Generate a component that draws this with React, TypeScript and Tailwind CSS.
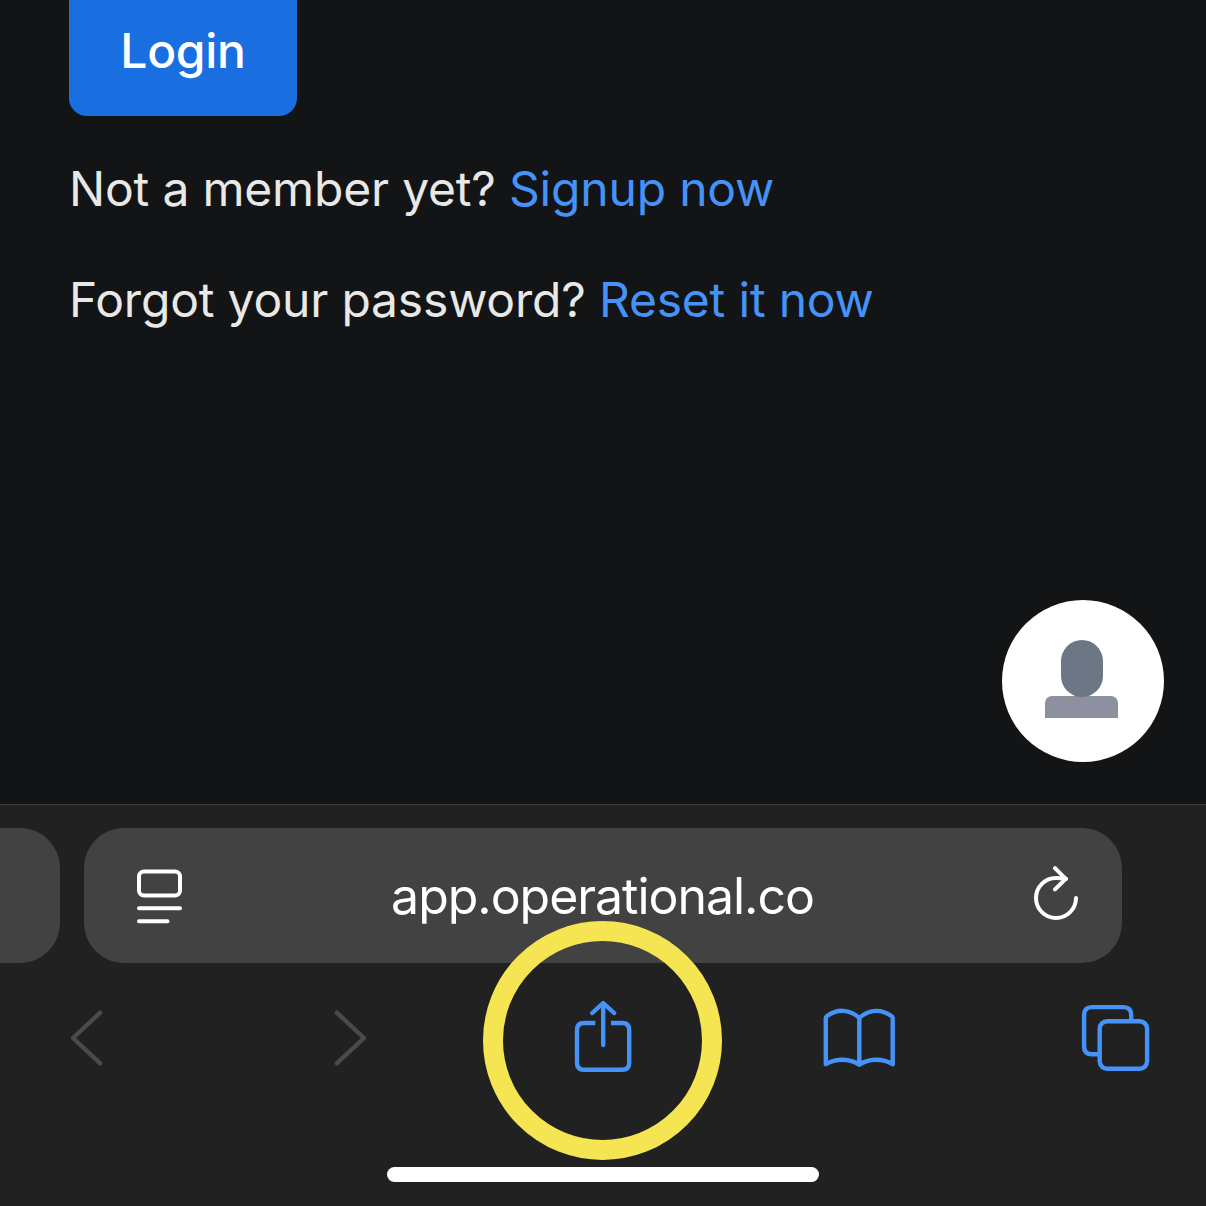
import type { ReactNode } from "react";

function ToolbarIcon({ viewBox, children }: { viewBox: string; children: ReactNode }) {
  return (
    <svg
      className="block size-20"
      viewBox={viewBox}
      fill="none"
      stroke="currentColor"
      strokeWidth="4.4"
      strokeLinecap="round"
      strokeLinejoin="round"
    >
      {children}
    </svg>
  );
}

function LoginArea() {
  return (
    <main className="relative h-[804px] px-[69px] text-5xl leading-[72px] tracking-[-0.19px] text-[#e8e8e6]">
      <button className="flex h-[116px] w-[228px] justify-center rounded-b-[18px] bg-[#1a6fe0] pt-[15px] font-medium tracking-[-0.3px] text-white">
        Login
      </button>
      <p className="mt-[37px] whitespace-nowrap">
        Not a member yet? <a className="text-[#4593f8]">Signup now</a>
      </p>
      <p className="mt-[39px] whitespace-nowrap">
        Forgot your password? <a className="text-[#4593f8]">Reset it now</a>
      </p>
      <div className="absolute top-[600px] right-[42px] flex size-[162px] flex-col items-center rounded-full bg-white pt-10">
        <div className="z-10 mr-[3px] h-[57px] w-[42px] rounded-full bg-[#6d7684]" />
        <div className="-mt-px mr-[3px] h-[22px] w-[73px] rounded-t-[7px] bg-[#8d909e]" />
      </div>
    </main>
  );
}

function AddressBar() {
  return (
    <div className="flex h-[135px] gap-6">
      <div className="w-[60px] rounded-r-[40px] bg-[#424242]" />
      <div className="flex w-[1038px] items-center justify-between rounded-[40px] bg-[#424242] pr-[43px] pl-[52px] text-white">
        <svg className="h-[56px] w-[46px]" viewBox="136 868 46 56" fill="none" stroke="currentColor" strokeWidth="4" strokeLinecap="round">
          <rect x="139" y="871.5" width="41" height="24" rx="5" />
          <path d="M139 908.3H180M139 921.2H167.5" />
        </svg>
        <span className="mr-[10px] text-[50px] leading-[60px] tracking-[-1.04px]">app.operational.co</span>
        <svg className="mb-1 h-[56px] w-[46px]" viewBox="1033 866 46 56" fill="none" stroke="currentColor" strokeWidth="4" strokeLinecap="round" strokeLinejoin="round">
          <path d="M1066 878.8C1062.5 878.2 1059 878 1056 878A20 20 0 1 0 1076 898" />
          <path d="M1055 868.2L1065.7 878.9L1055 889.4" />
        </svg>
      </div>
    </div>
  );
}

function Toolbar() {
  return (
    <div className="mt-[34px] flex h-20 text-[#4593f8]">
      <div className="ml-[47px] text-[#4a4a4a]">
        <ToolbarIcon viewBox="47 997 80 80">
          <path d="M100.2 1012.7L73 1038L100.2 1063.3" />
        </ToolbarIcon>
      </div>
      <div className="ml-[183px] text-[#4a4a4a]">
        <ToolbarIcon viewBox="310 997 80 80">
          <path d="M336.8 1012.7L364 1038L336.8 1063.3" />
        </ToolbarIcon>
      </div>
      <div className="relative ml-[173px]">
        <ToolbarIcon viewBox="563 997 80 80">
          <path strokeLinecap="butt" d="M595.3 1023H584Q577 1023 577 1030V1062.8Q577 1069.8 584 1069.8H622.2Q629.2 1069.8 629.2 1062.8V1030Q629.2 1023 622.2 1023H611" />
          <path d="M603.2 1045V1003.5M592.3 1013L603.2 1003L614.1 1013" />
        </ToolbarIcon>
        <div className="absolute -top-[76px] -left-20 size-[239px] rounded-full border-20 border-[#f6e552]" />
      </div>
      <div className="ml-[176px]">
        <ToolbarIcon viewBox="819 997 80 80">
          <path d="M859.3 1018V1064.7C850 1058.2 836 1058 825.8 1064.2V1018C825.8 1017 826.2 1016.5 827 1016C837 1008.8 850 1008.8 859.3 1018C869 1008.8 881.5 1008.8 891.5 1016C892.3 1016.5 892.7 1017 892.7 1018V1064.2C882.5 1058 868.5 1058.2 859.3 1064.7" />
        </ToolbarIcon>
      </div>
      <div className="ml-[177px]">
        <ToolbarIcon viewBox="1076 997 80 80">
          <path strokeLinecap="butt" d="M1098.5 1054.3H1092Q1084.1 1054.3 1084.1 1046.4V1015Q1084.1 1007.1 1092 1007.1H1123.3Q1131.2 1007.1 1131.2 1015V1021" />
          <rect x="1099.7" y="1021.2" width="47.4" height="47.6" rx="7.5" />
        </ToolbarIcon>
      </div>
    </div>
  );
}

export default function App() {
  return (
    <div className="h-[1206px] w-[1206px] overflow-hidden bg-[#131415] font-['Inter',sans-serif]">
      <LoginArea />
      <footer className="h-[402px] border-t border-[#3a3a3a] bg-[#212121] pt-[23px]">
        <AddressBar />
        <Toolbar />
        <div className="mx-auto mt-[90px] h-[15px] w-[432px] rounded-full bg-white" />
      </footer>
    </div>
  );
}
